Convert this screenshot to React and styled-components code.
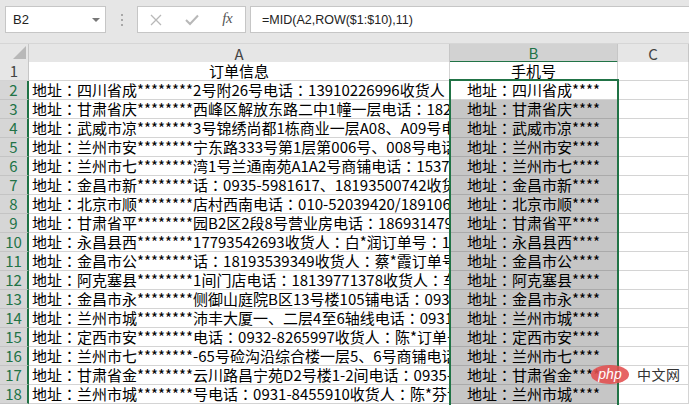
import React from "react";
import styled, { createGlobalStyle } from "styled-components";

const GREEN = "#217346";
const GRID = "#d4d4d4";

const GlobalStyle = createGlobalStyle`
  html, body {
    margin: 0;
    padding: 0;
    background: #fff;
  }
  body {
    font-family: "Noto Sans CJK SC", "Noto Sans", sans-serif;
    overflow: hidden;
  }
`;

const Page = styled.div`
  position: relative;
  width: 689px;
  height: 405px;
  overflow: hidden;
  background: #fff;
`;

// formula bar
const FormulaBar = styled.div`
  display: flex;
  align-items: stretch;
  height: 43px;
  box-sizing: border-box;
  padding: 6px 0 10px 5px;
  background: #e6e6e6;
`;

const NameBox = styled.div`
  display: flex;
  align-items: center;
  justify-content: space-between;
  width: 101px;
  box-sizing: border-box;
  padding: 0 5px 0 7px;
  background: #fff;
  border: 1px solid #c6c6c6;
  font: 13px "Liberation Sans", Arial, sans-serif;
  color: #222;
`;

const DropArrow = styled.span`
  width: 0;
  height: 0;
  border-left: 4px solid transparent;
  border-right: 4px solid transparent;
  border-top: 4px solid #777;
  margin-top: 1px;
`;

const Grip = styled.div`
  width: 31px;
  display: flex;
  flex-direction: column;
  align-items: center;
  justify-content: center;
  gap: 3px;
  span {
    width: 2px;
    height: 2px;
    background: #a8a8a8;
  }
`;

const ButtonBox = styled.div`
  display: flex;
  width: 109px;
  box-sizing: border-box;
  background: #fff;
  border: 1px solid #c6c6c6;
`;

const BarButton = styled.div`
  width: 36px;
  display: flex;
  align-items: center;
  justify-content: center;
  color: ${(p) => (p.$dim ? "#b8b8b8" : "#555")};
`;

const Fx = styled.span`
  font: italic 15px "Liberation Serif", "DejaVu Serif", serif;
  letter-spacing: -0.5px;
  color: #555;
  margin-top: -2px;
`;

const FormulaInput = styled.div`
  flex: 1;
  margin: 0 -2px 0 4px;
  display: flex;
  align-items: center;
  padding-left: 11px;
  background: #fff;
  border: 1px solid #c6c6c6;
  font: 12.5px "Liberation Sans", Arial, sans-serif;
  color: #222;
  white-space: nowrap;
`;

// sheet
const COLS = "29px 421px 168px 1fr";

const HeaderRow = styled.div`
  display: grid;
  grid-template-columns: ${COLS};
  height: 19px;
  box-sizing: border-box;
  border-top: 1px solid #d6d6d6;
  background: #e6e6e6;
`;

const ColHead = styled.div`
  display: flex;
  align-items: center;
  justify-content: center;
  box-sizing: border-box;
  border-right: 1px solid #c6c6c6;
  border-bottom: ${(p) => (p.$active ? `2px solid ${GREEN}` : "1px solid #bdbdbd")};
  background: ${(p) => (p.$active ? "#d2d2d2" : "#e6e6e6")};
  color: ${(p) => (p.$active ? GREEN : "#444")};
  font-size: 15px;
  line-height: 17px;
`;

const Corner = styled.div`
  box-sizing: border-box;
  border-right: 1px solid #c6c6c6;
  border-bottom: 1px solid #bdbdbd;
  svg {
    display: block;
  }
`;

const Body = styled.div`
  position: relative;
`;

const Row = styled.div`
  display: grid;
  grid-template-columns: ${COLS};
  height: 19px;
`;

const RowHead = styled.div`
  display: flex;
  align-items: center;
  justify-content: center;
  box-sizing: border-box;
  background: ${(p) => (p.$active ? "#d6d6d6" : "#e6e6e6")};
  border-right: ${(p) => (p.$active ? `2px solid ${GREEN}` : "1px solid #c6c6c6")};
  border-bottom: 1px solid ${(p) => (p.$active ? "#c4c4c4" : GRID)};
  color: ${(p) => (p.$active ? GREEN : "#444")};
  font-size: 15px;
  line-height: 18px;
`;

const Cell = styled.div`
  box-sizing: border-box;
  padding: 0 3px;
  overflow: hidden;
  white-space: nowrap;
  text-align: ${(p) => (p.$center ? "center" : "left")};
  background: ${(p) => (p.$filled ? "#c6c6c6" : "#fff")};
  border-right: 1px solid ${GRID};
  border-bottom: 1px solid ${(p) => (p.$filled ? "#aaaaaa" : GRID)};
  font-size: 15px;
  line-height: 18px;
  color: #000;
`;

// full-width colon drawn centred, as the sheet font does
const Colon = styled.span`
  font-family: "Noto Sans CJK TC", "Noto Sans CJK SC", sans-serif;
`;

const Selection = styled.div`
  position: absolute;
  left: 449px;
  top: 17px;
  width: 170px;
  height: 400px;
  box-sizing: border-box;
  border: 2px solid ${GREEN};
  pointer-events: none;
`;

// watermark
const Watermark = styled.div`
  position: absolute;
  left: 591px;
  top: 364px;
  display: flex;
  align-items: center;
  gap: 8px;
`;

const PhpBadge = styled.span`
  width: 38px;
  height: 19px;
  border-radius: 50%;
  background: rgba(226, 78, 78, 0.88);
  color: #fff;
  display: flex;
  align-items: center;
  justify-content: center;
  font: italic 14px "Liberation Sans", Arial, sans-serif;
  line-height: 19px;
`;

const SiteName = styled.span`
  font-size: 14px;
  color: #333;
  letter-spacing: 0.5px;
`;

const orders = [
  ["四川省成", "2号附26号电话：13910226996收货人：李*明订单号：1058"],
  ["甘肃省庆", "西峰区解放东路二中1幢一层电话：18215006833收货人"],
  ["武威市凉", "3号锦绣尚都1栋商业一层A08、A09号电话：0935"],
  ["兰州市安", "宁东路333号第1层第006号、008号电话：0931-"],
  ["兰州市七", "湾1号兰通南苑A1A2号商铺电话：15379020112收货人"],
  ["金昌市新", "话：0935-5981617、18193500742收货人：王*订单号"],
  ["北京市顺", "店村西南电话：010-52039420/18910678899收货人"],
  ["甘肃省平", "园B2区2段8号营业房电话：18693147913收货人"],
  ["永昌县西", "17793542693收货人：白*润订单号：1060012"],
  ["金昌市公", "话：18193539349收货人：蔡*霞订单号：1060"],
  ["阿克塞县", "1间门店电话：18139771378收货人：车*订单号"],
  ["金昌市永", "侧御山庭院B区13号楼105铺电话：0935-8218"],
  ["兰州市城", "沛丰大厦一、二层4至6轴线电话：0931-8801"],
  ["定西市安", "电话：0932-8265997收货人：陈*订单号：106"],
  ["兰州市七", "-65号硷沟沿综合楼一层5、6号商铺电话：09"],
  ["甘肃省金", "云川路昌宁苑D2号楼1-2间电话：0935-7512"],
  ["兰州市城", "号电话：0931-8455910收货人：陈*芬订单号"],
];

const Txt = ({ children }) => {
  const parts = children.split("：");
  return parts.map((p, i) => (
    <React.Fragment key={i}>
      {i > 0 && <Colon>：</Colon>}
      {p}
    </React.Fragment>
  ));
};

const App = () => {
  return (
    <Page>
      <GlobalStyle />
      <FormulaBar>
        <NameBox>
          B2
          <DropArrow />
        </NameBox>
        <Grip>
          <span />
          <span />
          <span />
        </Grip>
        <ButtonBox>
          <BarButton $dim>
            <svg width="12" height="12" viewBox="0 0 12 12">
              <path d="M1 1 L11 11 M11 1 L1 11" stroke="currentColor" strokeWidth="1.3" />
            </svg>
          </BarButton>
          <BarButton $dim>
            <svg width="14" height="12" viewBox="0 0 14 12">
              <path d="M1 6 L5 10 L13 1.5" stroke="currentColor" strokeWidth="2" fill="none" />
            </svg>
          </BarButton>
          <BarButton>
            <Fx>fx</Fx>
          </BarButton>
        </ButtonBox>
        <FormulaInput>=MID(A2,ROW($1:$10),11)</FormulaInput>
      </FormulaBar>

      <HeaderRow>
        <Corner>
          <svg width="28" height="17" viewBox="0 0 28 17">
            <polygon points="26,2 26,15 13,15" fill="#b8b8b8" />
          </svg>
        </Corner>
        <ColHead>A</ColHead>
        <ColHead $active>B</ColHead>
        <ColHead>C</ColHead>
      </HeaderRow>

      <Body>
        <Row>
          <RowHead>1</RowHead>
          <Cell $center>订单信息</Cell>
          <Cell $center>手机号</Cell>
          <Cell />
        </Row>
        {orders.map(([city, rest], i) => (
          <Row key={i}>
            <RowHead $active>{i + 2}</RowHead>
            <Cell>
              <Txt>{`地址：${city}********${rest}`}</Txt>
            </Cell>
            <Cell $center $filled={i > 0}>
              <Txt>{`地址：${city}****`}</Txt>
            </Cell>
            <Cell />
          </Row>
        ))}
        <Selection />
      </Body>

      <Watermark>
        <PhpBadge>php</PhpBadge>
        <SiteName>中文网</SiteName>
      </Watermark>
    </Page>
  );
};

export default App;
